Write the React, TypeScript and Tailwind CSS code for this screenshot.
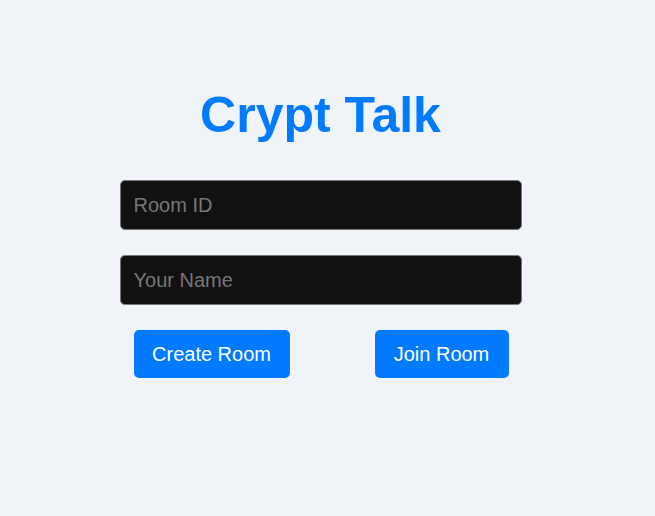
export default function App() {
  return (
    <div className="min-h-screen bg-[#f0f4f8] font-['Liberation_Sans',Arial,sans-serif]">
      <div className="flex flex-col items-center pr-[14px] pt-[84px]">
        <h1 className="text-[50px] font-bold leading-[62px] text-[#007bff]">Crypt Talk</h1>
        <div className="mt-[34px] flex w-[402px] flex-col gap-[25px]">
          <input
            placeholder="Room ID"
            className="h-[50px] w-full rounded-[5px] border border-[#777] bg-[#111111] px-[13px] text-[20px] text-white placeholder:text-[#777] focus:outline-none"
          />
          <input
            placeholder="Your Name"
            className="h-[50px] w-full rounded-[5px] border border-[#777] bg-[#111111] px-[13px] text-[20px] text-white placeholder:text-[#777] focus:outline-none"
          />
        </div>
        <div className="mt-[25px] flex w-[402px] justify-between pl-[14px] pr-[13px]">
          <button className="h-[48px] w-[156px] rounded-[5px] bg-[#007bff] text-[20px] text-white">
            Create Room
          </button>
          <button className="h-[48px] w-[134px] rounded-[5px] bg-[#007bff] text-[20px] text-white">
            Join Room
          </button>
        </div>
      </div>
    </div>
  );
}
